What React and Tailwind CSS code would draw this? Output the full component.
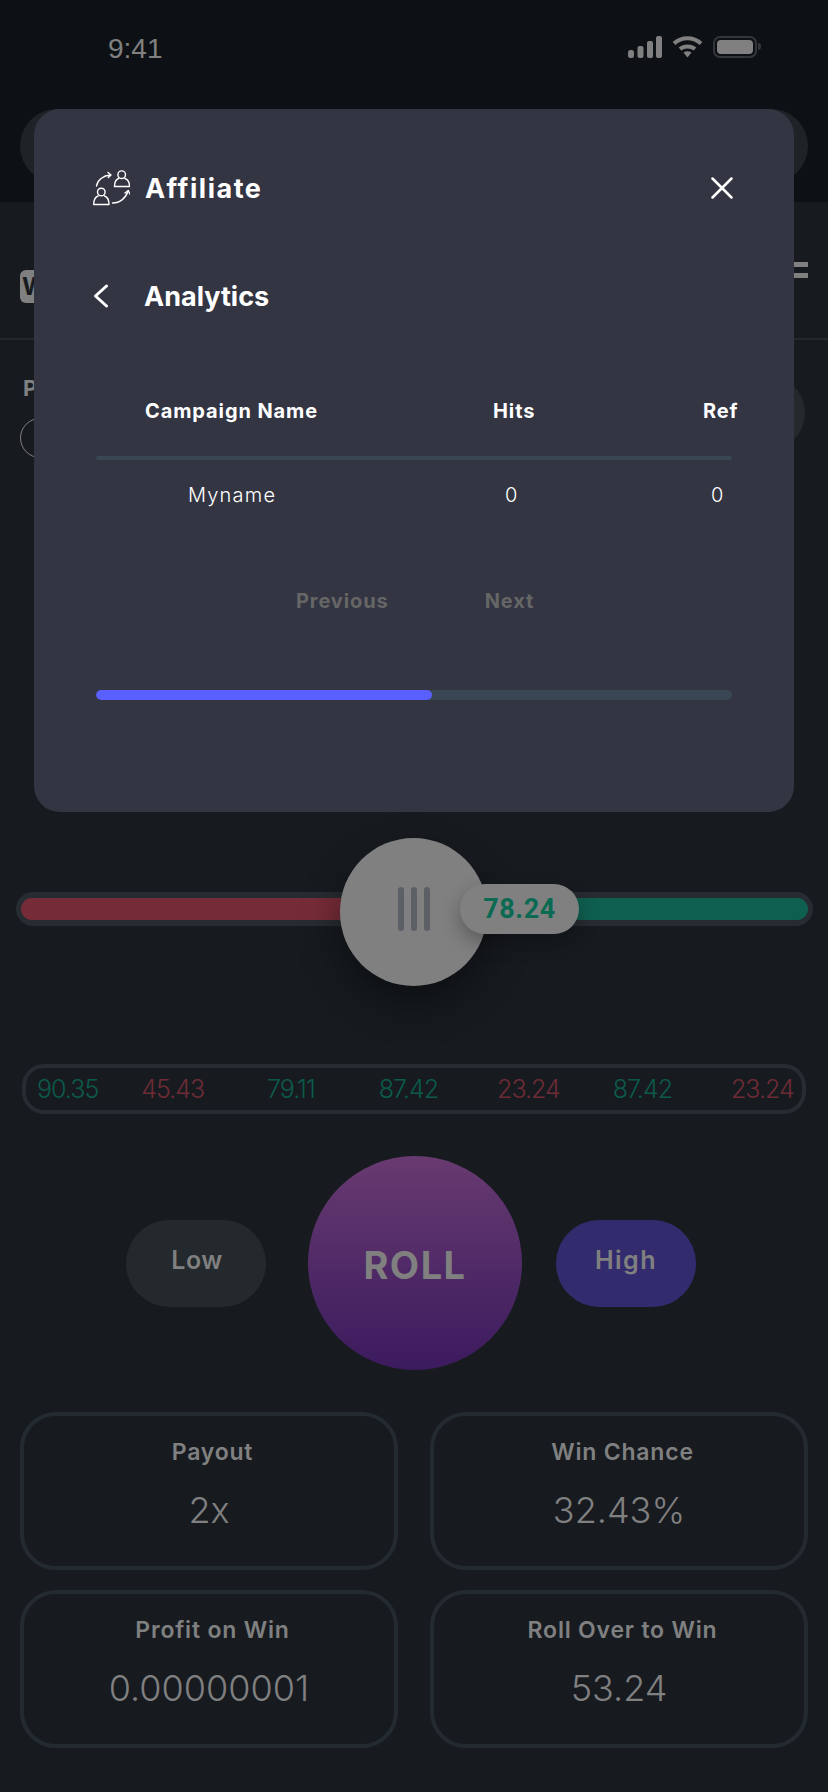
import React from 'react';

const history = [
  { value: '90.35', tone: 'text-[#0c5a4a]', gap: 'ml-0' },
  { value: '45.43', tone: 'text-[#6e2b36]', gap: 'ml-[43px]' },
  { value: '79.11', tone: 'text-[#0c5a4a]', gap: 'ml-[63px]' },
  { value: '87.42', tone: 'text-[#0c5a4a]', gap: 'ml-[64px]' },
  { value: '23.24', tone: 'text-[#6e2b36]', gap: 'ml-[59px]' },
  { value: '87.42', tone: 'text-[#0c5a4a]', gap: 'ml-[53px]' },
  { value: '23.24', tone: 'text-[#6e2b36]', gap: 'ml-[59px]' },
];

const stats = [
  { label: 'Payout', value: '2x' },
  { label: 'Win Chance', value: '32.43%' },
  { label: 'Profit on Win', value: '0.00000001' },
  { label: 'Roll Over to Win', value: '53.24' },
];

function StatusBar() {
  return (
    <div className="h-[109px] flex items-start justify-between pl-[108px] pr-[67px] pt-[32px]">
      <span className="font-['Liberation_Sans',sans-serif] text-[28px] leading-[34px] text-[#808080]">9:41</span>
      <div className="flex items-center gap-[10px] pt-[3px]">
        <svg width="34" height="22" viewBox="0 0 34 22" fill="#808080">
          <rect x="0" y="14" width="6" height="8" rx="2.5" />
          <rect x="9.5" y="10" width="6" height="12" rx="2" />
          <rect x="19" y="5" width="6" height="17" rx="2" />
          <rect x="28" y="0" width="6" height="22" rx="2" />
        </svg>
        <svg width="31" height="23" viewBox="0 0 31 23" fill="none" stroke="#808080" strokeWidth="4">
          <path d="M2 8.5C9.5 1.5 21.5 1.5 29 8.5" />
          <path d="M8 14C12 10.5 19 10.5 23 14" />
          <path d="M11.5 17.5L15.5 22.5L19.5 17.5C17 15.800 14 15.800 11.500 17.500Z" fill="#808080" stroke="none" />
        </svg>
        <div className="flex items-center gap-[1px]">
          <div className="w-[44px] h-[22px] rounded-[7px] border-2 border-[#333639] p-[2px]">
            <div className="w-full h-full rounded-[4px] bg-[#808080]" />
          </div>
          <div className="w-[3px] h-[7px] rounded-r-full bg-[#333639]" />
        </div>
      </div>
    </div>
  );
}

function AffiliateIcon() {
  return (
    <svg width="37" height="36" viewBox="0 0 37 36" fill="none" stroke="#fff" strokeWidth="1.4" strokeLinecap="round" strokeLinejoin="round">
      <circle cx="28.700" cy="4.700" r="3.800" />
      <path d="M25.500 8.500C23 9.500 21.500 12 21.500 16.500H36.500C36.500 12 35 9.500 32 8.500" />
      <circle cx="8.300" cy="22" r="3.800" />
      <path d="M5 26C2.500 27 0.700 29.500 0.700 34.500H16C16 29.500 14.500 27 11.500 26" />
      <path d="M3.500 16C4.500 10 10 5.500 17.500 5" />
      <path d="M15 2.500L18 5L15.300 7.500" />
      <path d="M19.500 33C27 33 33 28 35 21" />
      <path d="M32 23L35.300 20.500L36.800 24" />
    </svg>
  );
}

function AffiliateModal() {
  return (
    <div className="absolute left-[34px] top-[109px] w-[760px] h-[703px] rounded-[26px] bg-[#333542] text-white pl-[62px] pr-[62px]">
      <div className="flex items-center justify-between h-[40px] mt-[59px] -ml-[3px]">
        <div className="flex items-center gap-[15px]">
          <AffiliateIcon />
          <span className="text-[27px] font-bold tracking-[1.5px] leading-none">Affiliate</span>
        </div>
        <svg className="-mr-[1px]" width="22" height="22" viewBox="0 0 22 22" fill="none" stroke="#fff" strokeWidth="2.500" strokeLinecap="round">
          <path d="M1.500 1.500L20.500 20.500M20.500 1.500L1.500 20.500" />
        </svg>
      </div>

      <div className="flex items-center h-[40px] mt-[68px] -ml-[3px]">
        <svg width="16" height="24" viewBox="0 0 16 24" fill="none" stroke="#fff" strokeWidth="3" strokeLinecap="round" strokeLinejoin="round">
          <path d="M13.500 2L2.500 12L13.500 22" />
        </svg>
        <span className="ml-[35px] text-[27px] font-bold leading-none">Analytics</span>
      </div>

      <div className="relative h-[40px] mt-[75px] text-[20px] font-bold leading-[40px] tracking-[0.9px]">
        <span className="absolute left-[49px]">Campaign Name</span>
        <span className="absolute left-[397px]">Hits</span>
        <span className="absolute left-[607px]">Ref</span>
      </div>
      <div className="h-[4px] mt-[25px] rounded-full bg-[#3a4653]" />
      <div className="relative h-[40px] mt-[15px] text-[20px] font-light leading-[40px] tracking-[1.2px]">
        <span className="absolute left-[92px]">Myname</span>
        <span className="absolute left-[409px]">0</span>
        <span className="absolute left-[615px]">0</span>
      </div>

      <div className="flex h-[40px] mt-[66px] pl-[200px] gap-[96px] text-[20px] font-bold leading-[40px] tracking-[0.9px] text-[#666]">
        <span>Previous</span>
        <span>Next</span>
      </div>

      <div className="h-[10px] mt-[69px] rounded-full bg-[#3a4653] overflow-hidden">
        <div className="w-[336px] h-full rounded-full bg-[#5a60ff]" />
      </div>
    </div>
  );
}

function Slider() {
  return (
    <div className="relative ml-[16px] mr-[15px] h-[34px] rounded-full bg-[#262c31] p-[6px_5px]">
      <div className="flex h-full rounded-full overflow-hidden">
        <div className="w-[320px] bg-[#762c38]" />
        <div className="flex-1 bg-[#0f5f50]" />
      </div>
      <div className="absolute left-[324px] top-[-54px] w-[147px] h-[148px] rounded-full bg-[#808080] shadow-[0_18px_40px_rgba(0,0,0,0.45)] flex items-center justify-center gap-[7px]">
        <div className="w-[6px] h-[44px] rounded-full bg-[#5c5f66] -mt-[6px]" />
        <div className="w-[6px] h-[44px] rounded-full bg-[#5c5f66] -mt-[6px]" />
        <div className="w-[6px] h-[44px] rounded-full bg-[#5c5f66] -mt-[6px]" />
      </div>
      <div className="absolute left-[444px] top-[-8px] w-[119px] h-[50px] rounded-[25px] bg-[#808080] shadow-[0_8px_20px_rgba(0,0,0,0.3)] flex items-center justify-center font-['Roboto',sans-serif] text-[27px] font-bold tracking-[0.5px] text-[#0a6a52]">
        78.24
      </div>
    </div>
  );
}

export default function App() {
  return (
    <div className="relative w-[828px] h-[1792px] overflow-hidden bg-[#171b20] font-['Inter',sans-serif]">
      {/* Top bar under the overlay */}
      <div className="h-[202px] bg-[#0d1115]">
        <StatusBar />
        <div className="mx-[20px] h-[74px] rounded-full bg-[#1f2327]" />
      </div>

      {/* Page header under the overlay */}
      <div className="h-[138px] border-b-2 border-[#23282c] flex items-start justify-between px-[20px] pt-[68px]">
        <div className="w-[40px] h-[33px] rounded-[6px] bg-[#808080] text-[#171b20] font-bold text-[24px] leading-[33px] pl-[2px]">W</div>
        <div className="flex flex-col items-end gap-[6px] -mt-[8px]">
          <div className="w-[14px] h-[5px] bg-[#808080]" />
          <div className="w-[14px] h-[5px] bg-[#808080]" />
        </div>
      </div>

      <div className="flex justify-between pl-[23px] pr-[23px] pt-[35px] h-[552px]">
        <div>
          <div className="text-[22px] font-bold leading-[26px] text-[#808080]">P</div>
          <div className="mt-[17px] -ml-[3px] w-[40px] h-[40px] rounded-full border border-[#808080]" />
        </div>
        <div className="w-[76px] h-[76px] rounded-full bg-[#23292d]" />
      </div>

      <Slider />

      {/* Roll history */}
      <div className="mx-[22px] mt-[138px] h-[50px] rounded-[22px] border-4 border-[#262c31] flex items-center pl-[11px] text-[25px] font-light leading-none tracking-[-1px]">
        {history.map((item, idx) => (
          <span key={idx} className={`${item.tone} ${item.gap}`}>{item.value}</span>
        ))}
      </div>

      {/* Bet actions */}
      <div className="flex items-center pl-[126px] mt-[42px]">
        <button className="w-[140px] h-[87px] rounded-[44px] bg-[#23292d] text-[25px] font-semibold tracking-[0.5px] text-[#808080] pb-[4px] pl-[2px]">Low</button>
        <button className="ml-[42px] w-[214px] h-[214px] rounded-full bg-gradient-to-b from-[#683a70] to-[#3c1a5e] text-[38px] font-bold tracking-[1.5px] text-[#808080] pt-[4px]">ROLL</button>
        <button className="ml-[34px] w-[140px] h-[87px] rounded-[44px] bg-[#322c6e] text-[25px] font-semibold tracking-[1.5px] text-[#808080] pb-[4px]">High</button>
      </div>

      {/* Stat cards */}
      <div className="grid grid-cols-2 gap-x-[32px] gap-y-[20px] mx-[20px] mt-[42px]">
        {stats.map((stat, idx) => (
          <div key={idx} className="h-[158px] rounded-[36px] border-4 border-[#242b30] flex flex-col items-center pt-[21px] text-[#808080]">
            <span className="ml-[7px] text-[23px] font-semibold leading-[30px] tracking-[0.8px]">{stat.label}</span>
            <span className="mt-[21px] text-[36px] font-light leading-[44px]">{stat.value}</span>
          </div>
        ))}
      </div>

      <AffiliateModal />
    </div>
  );
}
